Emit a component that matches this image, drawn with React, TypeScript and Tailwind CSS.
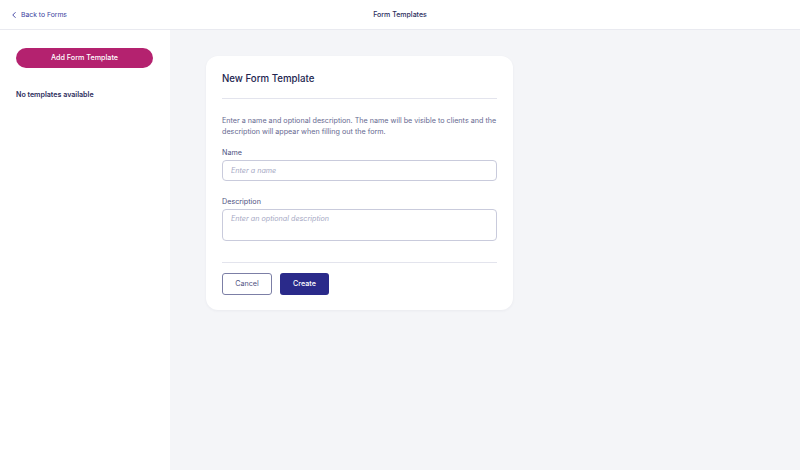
import { ChevronLeft } from "lucide-react";

const App = () => (
  <div className="flex h-[470px] w-[800px] flex-col bg-white font-['Inter',sans-serif] text-[#2b2d5c]">
    {/* Header */}
    <header className="relative flex h-[30px] shrink-0 items-center border-b border-[#e9eaf0] pl-[9px]">
      <a className="flex items-center gap-[2px] text-[6.8px] leading-[10px] text-[#3c3fa0]" href="#">
        <ChevronLeft className="h-[10px] w-[10px]" strokeWidth={2.2} />
        Back to Forms
      </a>
      <div className="absolute left-1/2 -translate-x-1/2 text-[7px] font-medium leading-[10px] text-[#2b2d5c]">
        Form Templates
      </div>
    </header>

    <div className="flex flex-1">
      {/* Sidebar */}
      <aside className="w-[170px] shrink-0 bg-white px-[16px] pt-[18px]">
        <button className="block h-[20px] w-[137px] rounded-full bg-[#b4226f] text-[7.2px] font-medium leading-[10px] text-white">
          Add Form Template
        </button>
        <p className="mt-[22px] text-[7.1px] font-semibold leading-[10px] text-[#2b2d5c]">No templates available</p>
      </aside>

      {/* Main */}
      <main className="flex-1 bg-[#f4f5f8] pl-[36px] pt-[26px]">
        <div className="w-[307px] rounded-[12px] bg-white px-[16px] pb-[15px] pt-[17px] shadow-[0_1px_3px_rgba(40,40,80,0.05)]">
          <h2 className="text-[9.7px] font-medium leading-[12px] text-[#23254f]">New Form Template</h2>
          <div className="mt-[13px] border-t border-[#e3e4ed]" />

          <p className="mt-[16px] text-[7.2px] leading-[11px] text-[#666990]">
            Enter a name and optional description. The name will be visible to clients and the description will appear when filling out the form.
          </p>

          <label className="mt-[11px] block text-[7.2px] leading-[10px] text-[#4e5180]">Name</label>
          <input
            className="mt-[2px] block h-[21px] w-full rounded-[4px] border border-[#c9cbdc] px-[8px] text-[7.2px] italic outline-none placeholder:text-[#a6a9c4]"
            placeholder="Enter a name"
          />

          <label className="mt-[16px] block text-[7.2px] leading-[10px] text-[#4e5180]">Description</label>
          <textarea
            className="mt-[2px] block h-[32px] w-full resize-none rounded-[4px] border border-[#c9cbdc] px-[8px] pt-[4px] text-[7.2px] italic leading-[10px] outline-none placeholder:text-[#a6a9c4]"
            placeholder="Enter an optional description"
          />

          <div className="mt-[21px] border-t border-[#e3e4ed]" />

          <div className="mt-[10px] flex gap-[8px]">
            <button className="h-[22px] w-[50px] rounded-[3px] border border-[#7c7fa6] text-[7.2px] text-[#4e5180]">
              Cancel
            </button>
            <button className="h-[22px] w-[49px] rounded-[3px] bg-[#2a2a8a] text-[7.2px] font-medium text-white">
              Create
            </button>
          </div>
        </div>
      </main>
    </div>
  </div>
);

export default App;
